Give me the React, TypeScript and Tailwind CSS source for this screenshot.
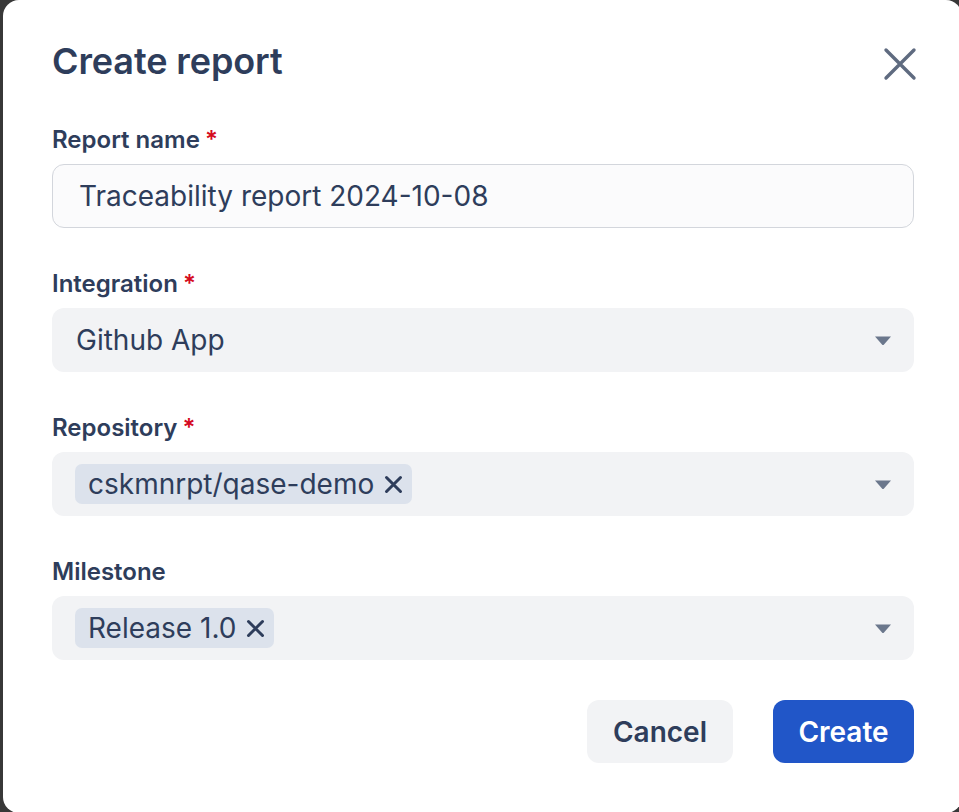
import { useState } from "react"

const font = { fontFamily: "Inter, 'Noto Sans', sans-serif" }

const Caret = () => (
  <svg width="18" height="11" viewBox="0 0 18 11" className="shrink-0">
    <path d="M1 1.5h16l-7.2 8.2a1.1 1.1 0 0 1-1.6 0z" fill="#6b778c" />
  </svg>
)

const TagX = () => (
  <svg width="19" height="19" viewBox="0 0 19 19" className="shrink-0">
    <path
      d="M2.5 2.5l14 14M16.5 2.5l-14 14"
      stroke="#2e3d5b"
      strokeWidth="3"
      strokeLinecap="round"
    />
  </svg>
)

const Label = ({ text, required }: { text: string; required?: boolean }) => (
  <div className="h-[24px] leading-[24px] text-[24px] font-semibold text-[#2e3d5b] flex items-center">
    {text}
    {required && <span className="ml-[5px] text-[#d50b1f]">*</span>}
  </div>
)

const Tag = ({ text }: { text: string }) => (
  <span className="h-[40px] flex items-center gap-[10px] rounded-[7px] bg-[#dce2ec] pl-[13px] pr-[9px] text-[28px] text-[#2e3d5b]">
    {text}
    <TagX />
  </span>
)

export default function App() {
  const [name, setName] = useState("Traceability report 2024-10-08")

  return (
    <div className="w-screen h-[812px] overflow-hidden bg-[#383838] pl-[3px]" style={font}>
      <div className="w-[959px] h-[813px] bg-white rounded-[16px] pl-[49px] pt-[41px]">
        <div className="w-[862px] flex flex-col">
          {/* header */}
          <div className="h-[40px] flex items-center justify-between">
            <h1 className="text-[36px] leading-[40px] font-semibold text-[#2e3d5b] tracking-[-0.1px]">
              Create report
            </h1>
            <button className="w-[40px] h-[40px] flex items-center justify-center -mr-[6px] mt-[6px]">
              <svg width="34" height="34" viewBox="0 0 34 34">
                <path
                  d="M3 3l28 28M31 3L3 31"
                  stroke="#5f6b80"
                  strokeWidth="3.4"
                  strokeLinecap="round"
                />
              </svg>
            </button>
          </div>

          {/* report name */}
          <div className="mt-[47px]">
            <Label text="Report name" required />
            <input
              value={name}
              onChange={(e) => setName(e.target.value)}
              className="mt-[12px] w-full h-[64px] rounded-[12px] border border-[#d3d6dc] bg-[#fbfbfc] px-[26px] text-[28px] text-[#2e3d5b] outline-none"
            />
          </div>

          {/* integration */}
          <div className="mt-[44px]">
            <Label text="Integration" required />
            <div className="mt-[12px] h-[64px] rounded-[12px] bg-[#f2f3f5] pl-[24px] pr-[22px] flex items-center justify-between">
              <span className="text-[28px] text-[#2e3d5b]">Github App</span>
              <Caret />
            </div>
          </div>

          {/* repository */}
          <div className="mt-[44px]">
            <Label text="Repository" required />
            <div className="mt-[12px] h-[64px] rounded-[12px] bg-[#f2f3f5] pl-[23px] pr-[22px] flex items-center justify-between">
              <Tag text="cskmnrpt/qase-demo" />
              <Caret />
            </div>
          </div>

          {/* milestone */}
          <div className="mt-[44px]">
            <Label text="Milestone" />
            <div className="mt-[12px] h-[64px] rounded-[12px] bg-[#f2f3f5] pl-[23px] pr-[22px] flex items-center justify-between">
              <Tag text="Release 1.0" />
              <Caret />
            </div>
          </div>

          {/* footer */}
          <div className="mt-[40px] flex justify-end gap-[40px]">
            <button className="w-[146px] h-[63px] rounded-[12px] bg-[#f2f3f5] text-[28px] font-semibold text-[#2e3d5b]">
              Cancel
            </button>
            <button className="w-[141px] h-[63px] rounded-[12px] bg-[#2156c8] text-[28px] font-semibold text-white">
              Create
            </button>
          </div>
        </div>
      </div>
    </div>
  )
}
